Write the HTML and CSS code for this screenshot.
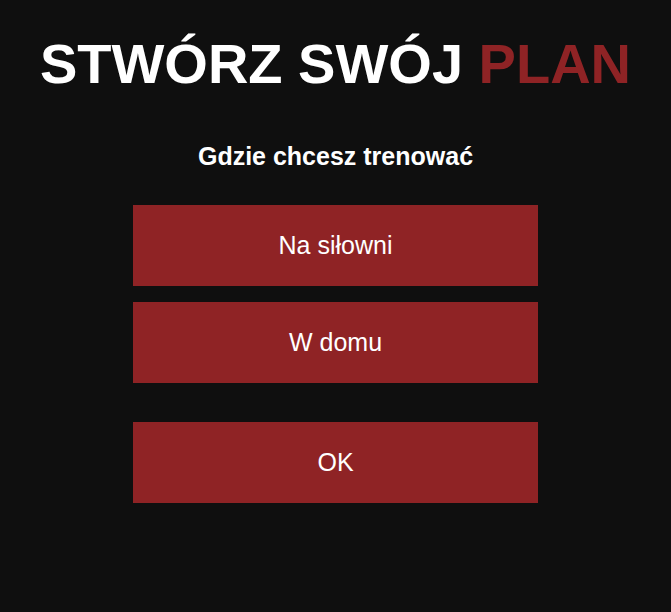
FILE: index.html
```html
<!DOCTYPE html>
<html lang="pl">
<head>
<meta charset="utf-8">
<link rel="stylesheet" href="styles.css">
</head>
<body>
<main class="page">
  <h1 class="title">STWÓRZ SWÓJ <span class="accent">PLAN</span></h1>
  <h2 class="question">Gdzie chcesz trenować</h2>
  <div class="options">
    <button class="btn">Na siłowni</button>
    <button class="btn">W domu</button>
  </div>
  <button class="btn btn-ok">OK</button>
</main>
</body>
</html>
```

FILE: styles.css
```css
html, body {
  margin: 0;
  padding: 0;
  background: #0f0f0f;
  height: 100%;
}
body {
  font-family: "Liberation Sans", Arial, sans-serif;
  color: #ffffff;
}
.page {
  display: flex;
  flex-direction: column;
  align-items: center;
  padding-top: 32px;
}
.title {
  margin: 0;
  font-size: 56px;
  font-weight: bold;
  line-height: 64px;
}
.accent {
  color: #8f2325;
}
.question {
  margin: 46px 0 0;
  font-size: 25px;
  font-weight: bold;
  line-height: 29px;
}
.options {
  display: flex;
  flex-direction: column;
  gap: 16px;
  margin-top: 34px;
}
.btn {
  width: 405px;
  height: 81px;
  border: none;
  background: #8f2325;
  color: #ffffff;
  font-family: "Liberation Sans", Arial, sans-serif;
  font-size: 25px;
  padding: 0;
  cursor: pointer;
}
.btn-ok {
  margin-top: 39px;
}
```
